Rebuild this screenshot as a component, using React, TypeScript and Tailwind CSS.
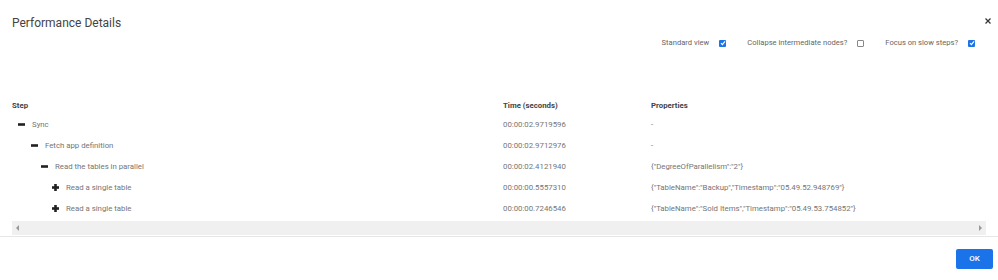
import React from 'react'

type Row = {
  label: string
  level: number
  expanded: boolean
  time: string
  props: string
}

const rows: Row[] = [
  { label: 'Sync', level: 0, expanded: true, time: '00:00:02.9719596', props: '-' },
  { label: 'Fetch app definition', level: 1, expanded: true, time: '00:00:02.9712976', props: '-' },
  { label: 'Read the tables in parallel', level: 2, expanded: true, time: '00:00:02.4121940', props: '{"DegreeOfParallelism":"2"}' },
  { label: 'Read a single table', level: 3, expanded: false, time: '00:00:00.5557310', props: '{"TableName":"Backup","Timestamp":"05.49.52.948769"}' },
  { label: 'Read a single table', level: 3, expanded: false, time: '00:00:00.7246546', props: '{"TableName":"Sold Items","Timestamp":"05.49.53.754852"}' },
]

const indent = ['pl-[6px]', 'pl-[19px]', 'pl-[29px]', 'pl-[40px]']

function Checkbox({ checked }: { checked: boolean }) {
  if (checked) {
    return (
      <span className="w-[7px] h-[7px] rounded-[1px] bg-[#1a73e8] flex items-center justify-center">
        <svg width="6" height="6" viewBox="0 0 6 6">
          <path d="M1 3.2 L2.4 4.6 L5 1.4" stroke="white" strokeWidth="1.2" fill="none" />
        </svg>
      </span>
    )
  }
  return <span className="w-[7px] h-[7px] rounded-[1px] border border-[#888] bg-white" />
}

function ToggleIcon({ expanded }: { expanded: boolean }) {
  return (
    <svg width="7" height="7" viewBox="0 0 7 7" className="flex-shrink-0">
      <rect x="0" y="2.2" width="7" height="2.6" fill="#222" />
      {!expanded && <rect x="2.2" y="0" width="2.6" height="7" fill="#222" />}
    </svg>
  )
}

function Option({ label, checked }: { label: string; checked: boolean }) {
  return (
    <div className="flex items-center gap-[10px]">
      <span>{label}</span>
      <Checkbox checked={checked} />
    </div>
  )
}

export default function App() {
  return (
    <div className="w-[998px] h-[280px] bg-white flex flex-col font-['Roboto',sans-serif] overflow-hidden">
      {/* Header */}
      <div className="flex items-start justify-between pl-3 pr-[7px] pt-[15px]">
        <h1 className="text-[12px] leading-[16px] text-[#444]">Performance Details</h1>
        <svg width="6" height="6" viewBox="0 0 6 6" className="mt-[3px]">
          <path d="M0.5 0.5 L5.5 5.5 M5.5 0.5 L0.5 5.5" stroke="#333" strokeWidth="1.2" />
        </svg>
      </div>
      <div className="flex justify-end gap-[21px] pr-[23px] mt-[5px] text-[7.6px] leading-[14px] text-[#666]">
        <Option label="Standard view" checked />
        <Option label="Collapse intermediate nodes?" checked={false} />
        <Option label="Focus on slow steps?" checked />
      </div>

      {/* Table */}
      <div className="mx-3 mt-[48px] text-[7.8px] text-[#757575]">
        <div className="flex h-[16px] items-center font-bold text-[#444]">
          <div className="w-[491px]">Step</div>
          <div className="w-[148px]">Time (seconds)</div>
          <div className="flex-1">Properties</div>
        </div>
        {rows.map((r, i) => (
          <div key={i} className="flex h-[21px] items-center">
            <div className={`w-[491px] flex items-center gap-[7px] ${indent[r.level]}`}>
              <ToggleIcon expanded={r.expanded} />
              <span>{r.label}</span>
            </div>
            <div className="w-[148px]">{r.time}</div>
            <div className="flex-1">{r.props}</div>
          </div>
        ))}
        <div className="mt-[2px] h-[14px] bg-[#f0f0f0] flex items-center justify-between px-[4px]">
          <span className="w-0 h-0 border-y-[3px] border-y-transparent border-r-[3px] border-r-[#999]" />
          <span className="w-0 h-0 border-y-[3px] border-y-transparent border-l-[3px] border-l-[#999]" />
        </div>
      </div>

      {/* Footer */}
      <div className="border-t border-[#e6e6e6] mt-[1px] flex justify-end pr-[5px] pt-[12px]">
        <button className="w-[37px] h-[20px] rounded-[2px] bg-[#1a73e8] text-white text-[8px] font-medium">OK</button>
      </div>
    </div>
  )
}
